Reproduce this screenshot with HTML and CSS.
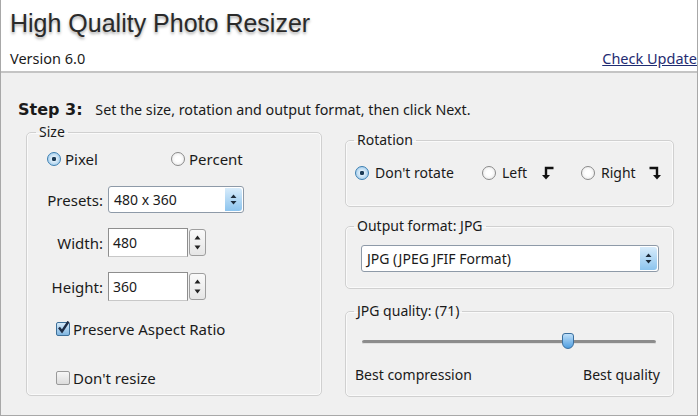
FILE: index.html
```html
<!DOCTYPE html>
<html lang="en">
<head>
  <meta charset="UTF-8">
  <title>High Quality Photo Resizer</title>
  <link rel="stylesheet" href="styles.css">
</head>
<body>
  <div class="window">
    <div class="header">
      <h1>High Quality Photo Resizer</h1>
      <div class="header-row">
        <span>Version 6.0</span>
        <a href="#" class="update">Check Update</a>
      </div>
    </div>

    <div class="main">
      <div class="step"><b>Step 3:</b> Set the size, rotation and output format, then click Next.</div>

      <div class="panels">
        <fieldset class="group size">
          <legend>Size</legend>
          <div class="radio-row">
            <label class="opt pixel"><span class="radio on"></span>Pixel</label>
            <label class="opt"><span class="radio"></span>Percent</label>
          </div>
          <div class="field">
            <span class="label">Presets:</span>
            <div class="select presets">
              <span>480 x 360</span>
              <span class="arrows">
                <svg width="7" height="11" viewBox="0 0 7 11"><path d="M3.5 0.5 L6.5 4 L0.5 4 Z M3.5 10.5 L6.5 7 L0.5 7 Z" fill="#1d2b3a"/></svg>
              </span>
            </div>
          </div>
          <div class="field">
            <span class="label">Width:</span>
            <div class="input">480</div>
            <div class="spin">
              <svg width="7" height="5" viewBox="0 0 7 5"><path d="M3.5 0.5 L6.5 4.5 L0.5 4.5 Z" fill="#222"/></svg>
              <svg width="7" height="5" viewBox="0 0 7 5"><path d="M3.5 4.5 L6.5 0.5 L0.5 0.5 Z" fill="#222"/></svg>
            </div>
          </div>
          <div class="field">
            <span class="label">Height:</span>
            <div class="input">360</div>
            <div class="spin">
              <svg width="7" height="5" viewBox="0 0 7 5"><path d="M3.5 0.5 L6.5 4.5 L0.5 4.5 Z" fill="#222"/></svg>
              <svg width="7" height="5" viewBox="0 0 7 5"><path d="M3.5 4.5 L6.5 0.5 L0.5 0.5 Z" fill="#222"/></svg>
            </div>
          </div>
          <label class="check-row preserve"><span class="check on">
            <svg width="13" height="13" viewBox="0 0 13 13"><path d="M2 6.5 L5 10.5 L11.5 0.5" fill="none" stroke="#1e2c45" stroke-width="2.4"/></svg>
          </span>Preserve Aspect Ratio</label>
          <label class="check-row"><span class="check"></span>Don't resize</label>
        </fieldset>

        <div class="right">
          <fieldset class="group rotation">
            <legend>Rotation</legend>
            <div class="rot-row">
              <label class="opt"><span class="radio on"></span>Don't rotate</label>
              <label class="opt"><span class="radio"></span>Left
                <svg class="turn" width="14" height="14" viewBox="0 0 14 14"><path d="M12.5 2 L5 2 L5 11" fill="none" stroke="#111" stroke-width="2.4"/><path d="M1 9 L9 9 L5 13.5 Z" fill="#111"/></svg>
              </label>
              <label class="opt"><span class="radio"></span>Right
                <svg class="turn" width="14" height="14" viewBox="0 0 14 14"><path d="M1.5 2 L9 2 L9 11" fill="none" stroke="#111" stroke-width="2.4"/><path d="M5 9 L13 9 L9 13.5 Z" fill="#111"/></svg>
              </label>
            </div>
          </fieldset>

          <fieldset class="group format">
            <legend>Output format: JPG</legend>
            <div class="select wide">
              <span>JPG (JPEG JFIF Format)</span>
              <span class="arrows">
                <svg width="7" height="11" viewBox="0 0 7 11"><path d="M3.5 0.5 L6.5 4 L0.5 4 Z M3.5 10.5 L6.5 7 L0.5 7 Z" fill="#1d2b3a"/></svg>
              </span>
            </div>
          </fieldset>

          <fieldset class="group quality">
            <legend>JPG quality: (71)</legend>
            <div class="slider">
              <div class="track"></div>
              <div class="thumb" style="left: 70%;"></div>
            </div>
            <div class="ends">
              <span>Best compression</span>
              <span>Best quality</span>
            </div>
          </fieldset>
        </div>
      </div>
    </div>
  </div>
</body>
</html>
```

FILE: styles.css
```css
body {
  margin: 0;
  background: #ffffff;
  font-family: "Noto Sans", "Liberation Sans", sans-serif;
  font-size: 14px;
  line-height: 18px;
  color: #1a1a1a;
}
.window {
  width: 696px;
  height: 415px;
  border: 1px solid #a8a8a8;
  border-top: none;
  display: flex;
  flex-direction: column;
  background: #f0f0f0;
}
.header {
  background: #ffffff;
  height: 71px;
  border-bottom: 2px solid #c4c4c4;
  padding: 0 0 0 9px;
}
h1 {
  margin: 0;
  padding-top: 9px;
  font-family: "Liberation Sans", Arial, sans-serif;
  font-weight: normal;
  font-size: 25px;
  line-height: 28px;
  color: #2a2a2a;
  text-shadow: 0 2px 3px rgba(0, 0, 0, 0.35);
}
.header-row {
  display: flex;
  justify-content: space-between;
  margin-top: 12px;
  font-size: 14.5px;
}
.update {
  color: #1f2c72;
  text-decoration: underline;
}
.main {
  flex: 1;
  padding: 0 0 0 17px;
}
.step {
  margin-top: 28px;
  font-size: 14.3px;
}
.step b {
  font-family: "DejaVu Sans", sans-serif;
  font-size: 16px;
  margin-right: 9px;
}
.panels {
  display: flex;
  gap: 23px;
  margin-top: 4px;
  padding-left: 8px;
}
.group {
  margin: 0;
  border: 1px solid #d0d0d0;
  border-radius: 5px;
  box-shadow: inset 0 0 0 1px #fafafa;
  padding: 0 10px;
  box-sizing: border-box;
}
legend {
  padding: 0 3px;
  margin-left: -1px;
}
.size {
  width: 296px;
  height: 273px;
  padding: 9px 0 0 20px;
  font-size: 15px;
}
.size legend {
  font-size: 14px;
  margin-left: -11px;
}
.radio-row {
  display: flex;
}
.opt {
  display: flex;
  align-items: center;
  gap: 4px;
}
.pixel {
  width: 124px;
}
.radio {
  width: 14px;
  height: 14px;
  border-radius: 50%;
  border: 1px solid #8a8a8a;
  background: radial-gradient(circle, #ffffff 30%, #e4e4e4 100%);
  box-sizing: border-box;
}
.radio.on {
  border-color: #3c7fb1;
  background: radial-gradient(circle, #1d3b55 0, #1d3b55 22%, #dcecf8 30%, #8cc1e8 100%);
}
.field {
  display: flex;
  align-items: center;
  margin-top: 18px;
}
.field + .field {
  margin-top: 15px;
}
.label {
  width: 56px;
  text-align: right;
  padding-right: 5px;
}
.select {
  display: flex;
  align-items: center;
  justify-content: space-between;
  background: #ffffff;
  border: 1px solid #8e9aa8;
  border-radius: 3px;
  height: 27px;
  box-sizing: border-box;
  padding-left: 5px;
  font-size: 14px;
}
.presets {
  width: 136px;
}
.arrows {
  width: 17px;
  height: 23px;
  margin-right: 1px;
  border-radius: 0 3px 3px 0;
  background: linear-gradient(#d8ecfb, #8cc4ee);
  display: flex;
  align-items: center;
  justify-content: center;
}
.input {
  width: 80px;
  height: 29px;
  box-sizing: border-box;
  border: 1px solid #8e8e8e;
  border-bottom-color: #c8c8c8;
  background: #ffffff;
  padding: 5px 0 0 4px;
  font-size: 14px;
}
.spin {
  width: 17px;
  height: 27px;
  box-sizing: border-box;
  margin-left: 1px;
  border: 1px solid #9e9e9e;
  border-radius: 3px;
  background: linear-gradient(#fafafa, #e6e6e6);
  display: flex;
  flex-direction: column;
  align-items: center;
  justify-content: space-around;
  padding: 3px 0;
}
.check-row {
  display: flex;
  align-items: center;
  margin-left: 9px;
}
.preserve {
  margin-top: 19px;
}
.check-row + .check-row {
  margin-top: 31px;
}
.check {
  width: 14px;
  height: 14px;
  border: 1px solid #9a9a9a;
  border-radius: 2px;
  background: linear-gradient(#f6f6f6, #dcdcdc);
  box-sizing: border-box;
  margin-right: 3px;
  position: relative;
}
.check.on {
  border-color: #3d6f99;
  background: linear-gradient(#d6eaf9, #7fb5e0);
}
.check svg {
  position: absolute;
  left: 0;
  top: -2px;
}
.right {
  width: 329px;
  padding-top: 8px;
  display: flex;
  flex-direction: column;
}
.rotation {
  height: 76px;
  padding: 15px 0 0 9px;
}
.rot-row {
  display: flex;
}
.rot-row .opt {
  gap: 6px;
}
.rot-row .opt:nth-child(1) {
  width: 127px;
}
.rot-row .opt:nth-child(2) {
  width: 99px;
}
.turn {
  margin-left: 8px;
}
.rot-row .opt:nth-child(3) .turn {
  margin-left: 6px;
}
.format {
  margin-top: 10px;
  height: 72px;
  padding: 10px 14px 0 15px;
}
.format legend {
  margin-left: -7px;
}
.wide {
  width: 298px;
}
.quality {
  margin-top: 13px;
  height: 95px;
  padding: 0 13px 0 9px;
}
.slider {
  position: relative;
  height: 20px;
  margin: 12px 4px 0 7px;
}
.track {
  position: absolute;
  left: 0;
  right: 0;
  top: 8px;
  height: 3px;
  border-radius: 2px;
  background: #8c8c8c;
  border-bottom: 1px solid #e0e0e0;
}
.thumb {
  position: absolute;
  top: 1px;
  width: 12px;
  height: 16px;
  margin-left: -6px;
  background: linear-gradient(#bfe0fa, #4f9ee0);
  border: 1px solid #3b6f9e;
  border-radius: 3px 3px 6px 6px;
  box-sizing: border-box;
}
.ends {
  display: flex;
  justify-content: space-between;
  margin-top: 14px;
}
```
